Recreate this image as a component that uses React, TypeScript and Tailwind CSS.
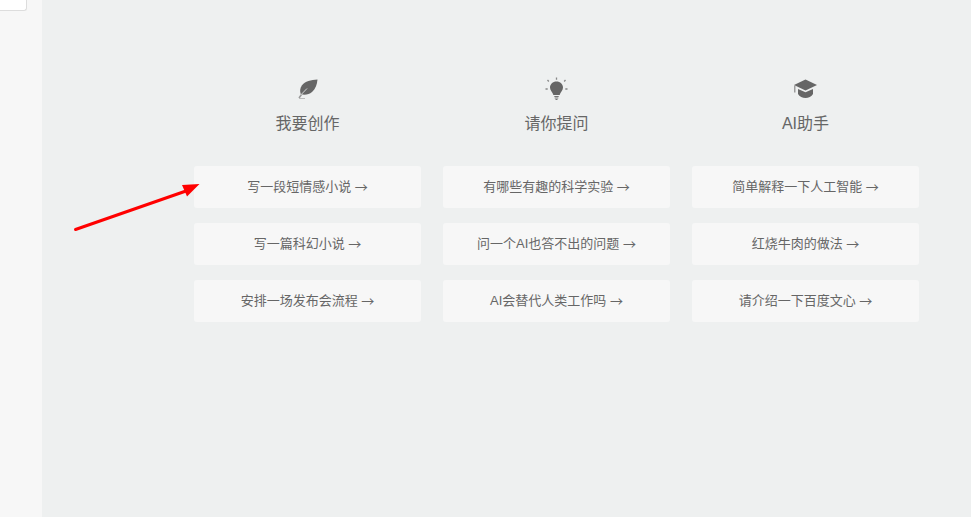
const COLUMNS = [
  {
    title: '我要创作',
    icon: 'feather',
    items: ['写一段短情感小说', '写一篇科幻小说', '安排一场发布会流程'],
  },
  {
    title: '请你提问',
    icon: 'bulb',
    items: ['有哪些有趣的科学实验', '问一个AI也答不出的问题', 'AI会替代人类工作吗'],
  },
  {
    title: 'AI助手',
    icon: 'cap',
    items: ['简单解释一下人工智能', '红烧牛肉的做法', '请介绍一下百度文心'],
  },
];

const FeatherIcon = () => (
  <svg width="20" height="20" viewBox="0 0 20 20" fill="none">
    <path
      d="M19.500 .5C13 .8 7 2.200 3.800 6.500 1.800 9.300 1.800 12.500 2.800 15.200 7 16.300 11 15.500 14 13 17.500 10 19 5.500 19.500 .5z"
      fill="#666"
    />
    <path d="M1 19 3.500 15.500" stroke="#999" strokeWidth="1.500" />
    <path d="M3.200 15.500 9 9.500" stroke="#eef0f0" strokeWidth=".8" />
    <path d="M1 19.500h6" stroke="#bbb" strokeWidth="1" />
  </svg>
);

const BulbIcon = () => (
  <svg width="24" height="24" viewBox="0 0 24 24" fill="none">
    <g transform="translate(-0.5 0)">
      <path
        d="M12 4.500C8.300 4.500 5.500 7.200 5.500 10.600c0 3 2.500 4.400 3.400 7.400h6.200c.9-3 3.400-4.400 3.400-7.400C18.500 7.200 15.700 4.500 12 4.500z"
        fill="#666"
      />
      <path d="M9.800 19.500h4.400M10.200 21h3.600M11 22.500h2" stroke="#777" strokeWidth="1" />
      <path
        d="M12 .5v2.200M3 3l1.300 1.500M21 3l-1.300 1.500M1 12h2.200M20.800 12H23"
        stroke="#888"
        strokeWidth="1.300"
      />
    </g>
  </svg>
);

const CapIcon = () => (
  <svg width="24" height="20" viewBox="0 0 24 20" fill="none">
    <path d="M0 6 11.500 .5 23 6 11.500 11.500z" fill="#666" />
    <path d="M4 10l7.500 3.300L19 10v5c-1.500 2.500-4.500 4-7.500 4S5.500 17.500 4 15z" fill="#666" />
    <path d="M.8 6.500V13.500" stroke="#888" strokeWidth="1.200" />
  </svg>
);

const ColumnIcon = ({ icon }: { icon: string }) => {
  if (icon === 'feather') return <FeatherIcon />;
  if (icon === 'cap') return <CapIcon />;
  return <BulbIcon />;
};

const App = () => {
  return (
    <div className="relative flex h-[517px] w-[971px] overflow-hidden bg-[#eef0f0] font-['Liberation_Sans','Noto_Sans_CJK_SC',sans-serif] text-[#666]">
      <aside className="w-[42px] shrink-0 bg-[#f7f7f7]" />
      <div className="absolute left-0 top-0 h-[11px] w-[27px] rounded-br-[3px] border-b border-r border-[#dddddd] bg-white" />
      <main className="flex flex-1 gap-[22px] pl-[152px] pr-[52px] pt-[77px]">
        {COLUMNS.map((col) => (
          <section key={col.title} className="flex w-[227px] flex-col">
            <div className="flex h-6 items-center justify-center">
              <ColumnIcon icon={col.icon} />
            </div>
            <h3 className="mt-[10px] text-center text-[16px] leading-[26px]">{col.title}</h3>
            <ul className="mt-[29px] flex flex-col gap-[15px]">
              {col.items.map((item) => (
                <li
                  key={item}
                  className="flex h-[42px] items-center justify-center whitespace-pre rounded-[3px] bg-[#f7f7f7] text-[13px]"
                >
                  {item} <span className="font-['Noto_Sans_CJK_SC',sans-serif]">→</span>
                </li>
              ))}
            </ul>
          </section>
        ))}
      </main>
      <svg className="absolute left-[70px] top-[178px]" width="135" height="58" viewBox="0 0 135 58">
        <path d="M5.500 51.500 L116 13" stroke="#ff0000" strokeWidth="3" strokeLinecap="round" />
        <path d="M129.500 6 L112 7 L117 18.500 Z" fill="#ff0000" />
      </svg>
    </div>
  );
};

export default App;
